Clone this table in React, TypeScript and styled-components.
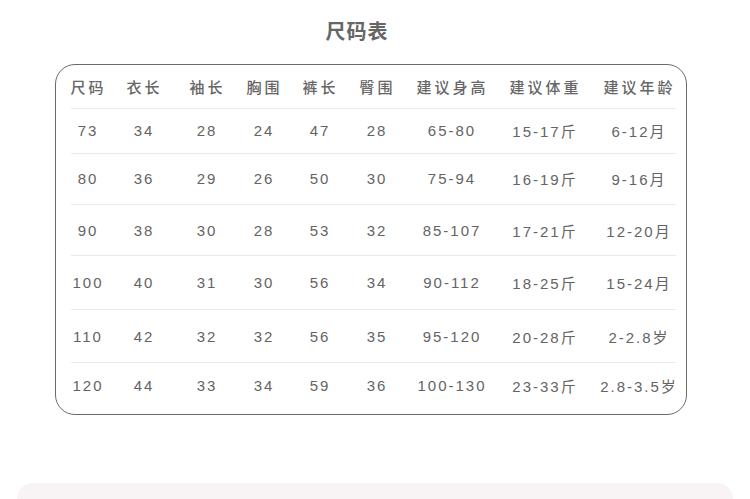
import React from "react";
import styled, { createGlobalStyle } from "styled-components";

const Global = createGlobalStyle`
  html, body { margin: 0; padding: 0; background: #ffffff; }
  body { font-family: "Liberation Sans", "Noto Sans CJK SC", sans-serif; color: #666; }
`;

const Page = styled.div`
  width: 750px;
  height: 499px;
  overflow: hidden;
  display: flex;
  flex-direction: column;
  & > * { flex-shrink: 0; }
`;

const TitleBar = styled.div`
  height: 64px;
  display: flex;
  align-items: center;
  justify-content: center;
  padding-right: 36px;
  padding-bottom: 4px;
  box-sizing: border-box;
`;

const Title = styled.h1`
  margin: 0;
  font-family: "Noto Sans CJK SC", sans-serif;
  font-size: 20px;
  font-weight: 700;
  color: #666;
  letter-spacing: 1px;
`;

const Card = styled.div`
  margin-left: 55px;
  width: 632px;
  height: 351px;
  box-sizing: border-box;
  border: 1px solid #6a6a6a;
  border-radius: 20px;
  padding: 0 0 6px 5px;
  display: flex;
  flex-direction: column;
`;

const cols = "52px 60px 66px 48px 64px 50px 100px 86px 102px";

const Row = styled.div<{ $h: number }>`
  display: grid;
  grid-template-columns: ${cols};
  height: ${(p) => p.$h}px;
  align-items: center;
`;

const HeadCell = styled.div`
  text-align: center;
  font-family: "Noto Sans CJK SC", sans-serif;
  font-size: 15px;
  font-weight: 500;
  letter-spacing: 3px;
  color: #666;
  white-space: nowrap;
  padding-left: 3px;
`;

const Cell = styled.div`
  text-align: center;
  font-family: "Liberation Sans", "Noto Sans CJK SC", sans-serif;
  font-size: 15px;
  letter-spacing: 2px;
  color: #646464;
  white-space: nowrap;
  padding-left: 2px;
`;

const Divider = styled.div`
  height: 1px;
  background: #e9e9e9;
  margin: 0 10px 0 10px;
`;

const Bottom = styled.div`
  margin: 68px 17px 0 17px;
  height: 16px;
  border-radius: 16px 16px 0 0;
  background: #f8f3f4;
`;

const headers = ["尺码", "衣长", "袖长", "胸围", "裤长", "臀围", "建议身高", "建议体重", "建议年龄"];

const data: string[][] = [
  ["73", "34", "28", "24", "47", "28", "65-80", "15-17斤", "6-12月"],
  ["80", "36", "29", "26", "50", "30", "75-94", "16-19斤", "9-16月"],
  ["90", "38", "30", "28", "53", "32", "85-107", "17-21斤", "12-20月"],
  ["100", "40", "31", "30", "56", "34", "90-112", "18-25斤", "15-24月"],
  ["110", "42", "32", "32", "56", "35", "95-120", "20-28斤", "2-2.8岁"],
  ["120", "44", "33", "34", "59", "36", "100-130", "23-33斤", "2.8-3.5岁"],
];

const heights = [44, 50, 51, 53, 52, 45];

export default function App() {
  return (
    <Page>
      <Global />
      <TitleBar>
        <Title>尺码表</Title>
      </TitleBar>
      <Card>
        <Row $h={43}>
          {headers.map((h) => (
            <HeadCell key={h}>{h}</HeadCell>
          ))}
        </Row>
        {data.map((r, i) => (
          <React.Fragment key={i}>
            <Divider />
            <Row $h={heights[i]}>
              {r.map((c, j) => (
                <Cell key={j}>{c}</Cell>
              ))}
            </Row>
          </React.Fragment>
        ))}
      </Card>
      <Bottom />
    </Page>
  );
}
